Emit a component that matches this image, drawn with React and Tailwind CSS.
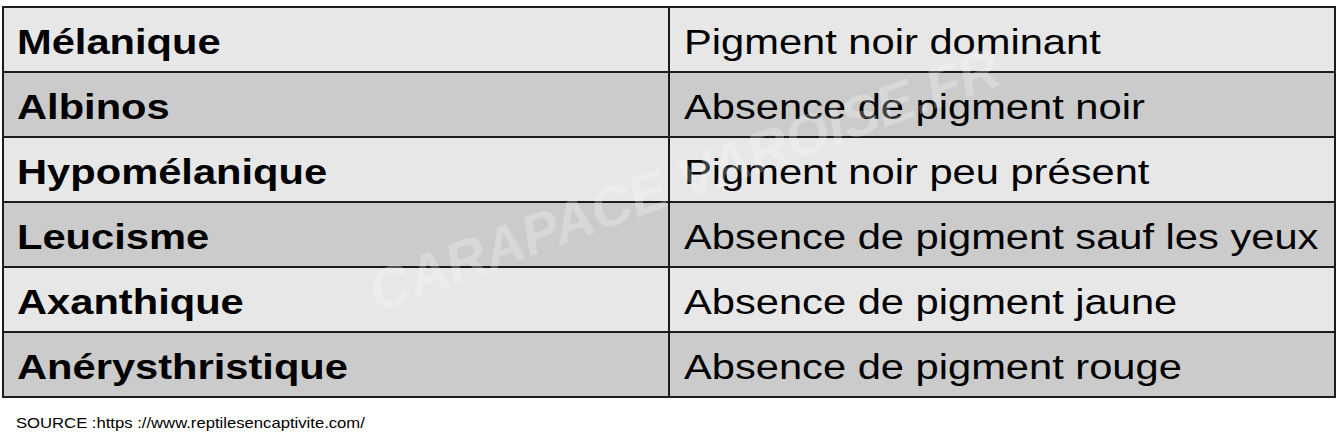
import React from "react";

const rows = [
  ["Mélanique", "Pigment noir dominant"],
  ["Albinos", "Absence de pigment noir"],
  ["Hypomélanique", "Pigment noir peu présent"],
  ["Leucisme", "Absence de pigment sauf les yeux"],
  ["Axanthique", "Absence de pigment jaune"],
  ["Anérysthristique", "Absence de pigment rouge"],
];

export default function App() {
  return (
    <div className="w-[1337px] h-[441px] bg-white font-['Liberation_Sans',Arial,sans-serif] text-black overflow-hidden">
      <div className="relative ml-[2px] mt-[6px] w-[1334px] border-2 border-[#1c1c1c]">
        {rows.map(([a, b], i) => (
          <div
            key={a}
            className={`flex ${i > 0 ? "h-[65px] border-t-2 border-[#1c1c1c]" : "h-[63px]"} ${
              i % 2 === 0 ? "bg-[#e7e7e7]" : "bg-[#cbcbcb]"
            }`}
          >
            <div className="w-[664px] pl-[13px] pt-[14px] text-[35px] leading-[39px] font-bold whitespace-nowrap">
              <span className="inline-block origin-left scale-x-[1.19]">{a}</span>
            </div>
            <div className="flex-1 border-l-2 border-[#1c1c1c] pl-[14px] pt-[14px] text-[35px] leading-[39px] whitespace-nowrap">
              <span className="inline-block origin-left scale-x-[1.19]">{b}</span>
            </div>
          </div>
        ))}
        <div className="pointer-events-none absolute left-[680px] top-[172px] -translate-x-1/2 -translate-y-1/2 -rotate-[20deg] whitespace-nowrap text-[56px] font-bold italic text-white/25 leading-none">
          CARAPACE VAROISE.FR
        </div>
      </div>
      <div className="mt-[16px] pl-[16px] text-[15px] leading-[17px] whitespace-nowrap">
        <span className="inline-block origin-left scale-x-[1.11]">SOURCE :https ://www.reptilesencaptivite.com/</span>
      </div>
    </div>
  );
}
